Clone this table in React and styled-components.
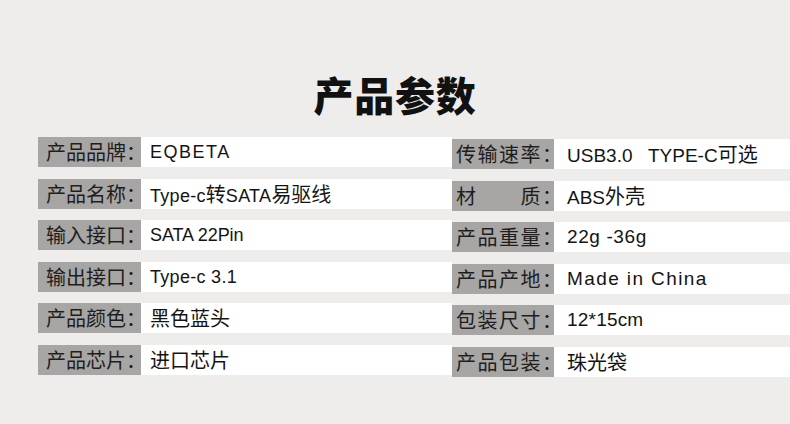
import React from "react";
import styled, { createGlobalStyle } from "styled-components";

const GlobalStyle = createGlobalStyle`
  html,
  body {
    margin: 0;
    padding: 0;
    background: #efecec;
  }

  #root {
    width: 790px;
    height: 424px;
    overflow: hidden;
  }
`;

const Page = styled.div`
  width: 790px;
  height: 424px;
  background: #efecec;
  font-family: "Liberation Sans", "Noto Sans CJK SC", sans-serif;
  color: #1c1c1c;
`;

const Title = styled.h1`
  margin: 0;
  padding-top: 74px;
  height: 41px;
  line-height: 41px;
  font-family: "Noto Sans CJK SC", sans-serif;
  font-size: 40px;
  font-weight: 900;
  letter-spacing: 0.8px;
  text-align: center;
  color: #111;
`;

const Table = styled.div`
  display: grid;
  grid-template-columns: 414px 1fr;
  margin-top: 22px;
  padding-left: 38px;
`;

const Column = styled.div`
  display: flex;
  flex-direction: column;
  gap: 11.6px;
  margin-top: ${({ $offset }) => $offset || 0}px;
`;

const Cell = styled.div`
  display: flex;
  height: 30px;
  background: #fff;
`;

const Label = styled.div`
  flex: none;
  width: ${({ $width }) => $width}px;
  box-sizing: border-box;
  padding-left: ${({ $pad }) => $pad}px;
  background: #a8a5a5;
  font-family: "Noto Sans CJK SC", sans-serif;
  font-size: 20px;
  line-height: 30px;
  letter-spacing: ${({ $spacing }) => $spacing || 0}px;
  color: #1e1e1e;
  white-space: pre;
`;

const Value = styled.div`
  padding-left: ${({ $pad }) => $pad}px;
  font-size: ${({ $size }) => $size}px;
  line-height: 30px;
  letter-spacing: ${({ $spacing }) => $spacing || 0}px;
  white-space: pre;
  color: #141414;
`;

const Han = styled.span`
  font-family: "Noto Sans CJK SC", sans-serif;
  font-size: 20px;
  letter-spacing: 0;
`;

const left = [
  { label: "产品品牌：", value: "EQBETA", spacing: 1.5 },
  { label: "产品名称：", value: "Type-c转SATA易驱线", spacing: 0.3 },
  { label: "输入接口：", value: "SATA 22Pin", spacing: -0.1 },
  { label: "输出接口：", value: "Type-c 3.1", spacing: 0.3 },
  { label: "产品颜色：", value: "黑色蓝头" },
  { label: "产品芯片：", value: "进口芯片" },
];

const right = [
  { label: "传输速率：", value: "USB3.0   TYPE-C可选", spacing: 0 },
  { label: "材　　质：", value: "ABS外壳", spacing: 0 },
  { label: "产品重量：", value: "22g -36g", spacing: 0.6 },
  { label: "产品产地：", value: "Made in China", spacing: 1.4 },
  { label: "包装尺寸：", value: "12*15cm", spacing: 0.2 },
  { label: "产品包装：", value: "珠光袋" },
];

// wrap runs of Chinese characters so they render at their own size
function renderText(text) {
  return text.split(/([\u4e00-\u9fff]+)/).map((part, i) =>
    /[\u4e00-\u9fff]/.test(part) ? <Han key={i}>{part}</Han> : part
  );
}

export default function App() {
  return (
    <Page>
      <GlobalStyle />
      <Title>产品参数</Title>
      <Table>
        <Column>
          {left.map((row) => (
            <Cell key={row.label}>
              <Label $width={103} $pad={8}>
                {row.label}
              </Label>
              <Value $pad={9} $size={18} $spacing={row.spacing}>
                {renderText(row.value)}
              </Value>
            </Cell>
          ))}
        </Column>
        <Column $offset={2}>
          {right.map((row) => (
            <Cell key={row.label}>
              <Label $width={102} $pad={4} $spacing={1.5}>
                {row.label}
              </Label>
              <Value $pad={13} $size={19} $spacing={row.spacing}>
                {renderText(row.value)}
              </Value>
            </Cell>
          ))}
        </Column>
      </Table>
    </Page>
  );
}
